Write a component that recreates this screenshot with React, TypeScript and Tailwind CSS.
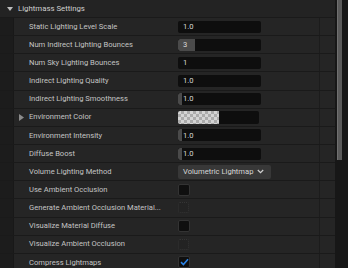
import React from "react";

type Kind =
  | { t: "num"; v: string; fill?: number }
  | { t: "color" }
  | { t: "drop"; v: string }
  | { t: "check"; state: "on" | "off" | "disabled" };

const rows: { label: string; kind: Kind; expand?: boolean }[] = [
  { label: "Static Lighting Level Scale", kind: { t: "num", v: "1.0" } },
  { label: "Num Indirect Lighting Bounces", kind: { t: "num", v: "3", fill: 17 } },
  { label: "Num Sky Lighting Bounces", kind: { t: "num", v: "1" } },
  { label: "Indirect Lighting Quality", kind: { t: "num", v: "1.0" } },
  { label: "Indirect Lighting Smoothness", kind: { t: "num", v: "1.0", fill: 4 } },
  { label: "Environment Color", kind: { t: "color" }, expand: true },
  { label: "Environment Intensity", kind: { t: "num", v: "1.0", fill: 4 } },
  { label: "Diffuse Boost", kind: { t: "num", v: "1.0", fill: 4 } },
  { label: "Volume Lighting Method", kind: { t: "drop", v: "Volumetric Lightmap" } },
  { label: "Use Ambient Occlusion", kind: { t: "check", state: "off" } },
  { label: "Generate Ambient Occlusion Material...", kind: { t: "check", state: "disabled" } },
  { label: "Visualize Material Diffuse", kind: { t: "check", state: "off" } },
  { label: "Visualize Ambient Occlusion", kind: { t: "check", state: "disabled" } },
  { label: "Compress Lightmaps", kind: { t: "check", state: "on" } },
];

function Value({ k }: { k: Kind }) {
  if (k.t === "num") {
    return (
      <div className="relative w-[83px] h-[12px] rounded-[2px] bg-[#0e0e0e] flex items-center overflow-hidden">
        {k.fill ? (
          <div className="absolute left-0 top-0 bottom-0 bg-[#4a4a4a] rounded-l-[2px]" style={{ width: k.fill }} />
        ) : null}
        <span className="relative pl-[5px] text-[7.6px] leading-none text-[#d6d6d6]">{k.v}</span>
      </div>
    );
  }
  if (k.t === "color") {
    return (
      <div className="w-[81px] h-[13px] rounded-[2px] bg-[#0e0e0e] flex overflow-hidden">
        <div
          className="w-[41px] h-full"
          style={{
            backgroundColor: "#d4d4d4",
            backgroundImage:
              "linear-gradient(45deg,#ababab 25%,transparent 25%,transparent 75%,#ababab 75%),linear-gradient(45deg,#ababab 25%,transparent 25%,transparent 75%,#ababab 75%)",
            backgroundSize: "6px 6px",
            backgroundPosition: "0 0,3px 3px",
          }}
        />
      </div>
    );
  }
  if (k.t === "drop") {
    return (
      <div className="w-[93px] h-[14px] rounded-[2px] bg-[#383838] flex items-center pl-[5px] gap-[4px]">
        <span className="text-[7.6px] leading-none text-[#d6d6d6] whitespace-nowrap">{k.v}</span>
        <svg width="7" height="5" viewBox="0 0 7 5">
          <path d="M0.8 1 L3.5 3.7 L6.2 1" fill="none" stroke="#d0d0d0" strokeWidth="1.2" />
        </svg>
      </div>
    );
  }
  if (k.state === "disabled") {
    return <div className="w-[11px] h-[11px] rounded-[2px] bg-[#232323] border border-dotted border-[#353535]" />;
  }
  return (
    <div className="w-[12px] h-[12px] rounded-[2px] bg-[#0f0f0f] border border-[#333] flex items-center justify-center">
      {k.state === "on" ? (
        <svg width="9" height="8" viewBox="0 0 9 8">
          <path d="M1 4.2 L3.4 6.5 L8 1.2" fill="none" stroke="#2b83e6" strokeWidth="1.6" />
        </svg>
      ) : null}
    </div>
  );
}

export default function App() {
  return (
    <div
      className="w-[348px] h-[268px] overflow-hidden flex bg-[#181818]"
      style={{ fontFamily: "Roboto, 'Liberation Sans', sans-serif" }}
    >
      <div className="w-[335px] flex flex-col">
        <div className="h-[18px] shrink-0 flex items-center bg-[#232323] border-b border-[#1a1a1a]">
          <svg width="8" height="6" viewBox="0 0 8 6" className="ml-[6px]">
            <path d="M1 1 L7 1 L4 5 Z" fill="#bdbdbd" />
          </svg>
          <span className="ml-[4px] text-[7.8px] leading-none text-[#cfcfcf]">Lightmass Settings</span>
        </div>
        {rows.map((r, i) => (
          <div key={i} className="h-[18.15px] shrink-0 flex border-b border-[#1a1a1a]">
            <div className="w-[14px] shrink-0 bg-[#1c1c1c] border-r border-[#181818]" />
            <div className="w-[158px] shrink-0 bg-[#252525] flex items-center relative overflow-hidden">
              {r.expand ? (
                <svg width="5" height="7" viewBox="0 0 5 7" className="absolute left-[5px]">
                  <path d="M0 0 L5 3.5 L0 7 Z" fill="#8c8c8c" />
                </svg>
              ) : null}
              <span className="pl-[15px] text-[7.6px] leading-none text-[#c4c4c4] whitespace-nowrap">{r.label}</span>
            </div>
            <div className="w-[147px] shrink-0 bg-[#252525] flex items-center pl-[6px]">
              <Value k={r.kind} />
            </div>
            <div className="flex-1 bg-[#252525] border-l border-[#1c1c1c]" />
          </div>
        ))}
      </div>
      <div className="flex-1 flex pl-[2px] bg-[#171717]">
        <div className="w-[5px] h-[160px] bg-[#5a5a5a] border-l border-[#707070]" />
      </div>
    </div>
  );
}
